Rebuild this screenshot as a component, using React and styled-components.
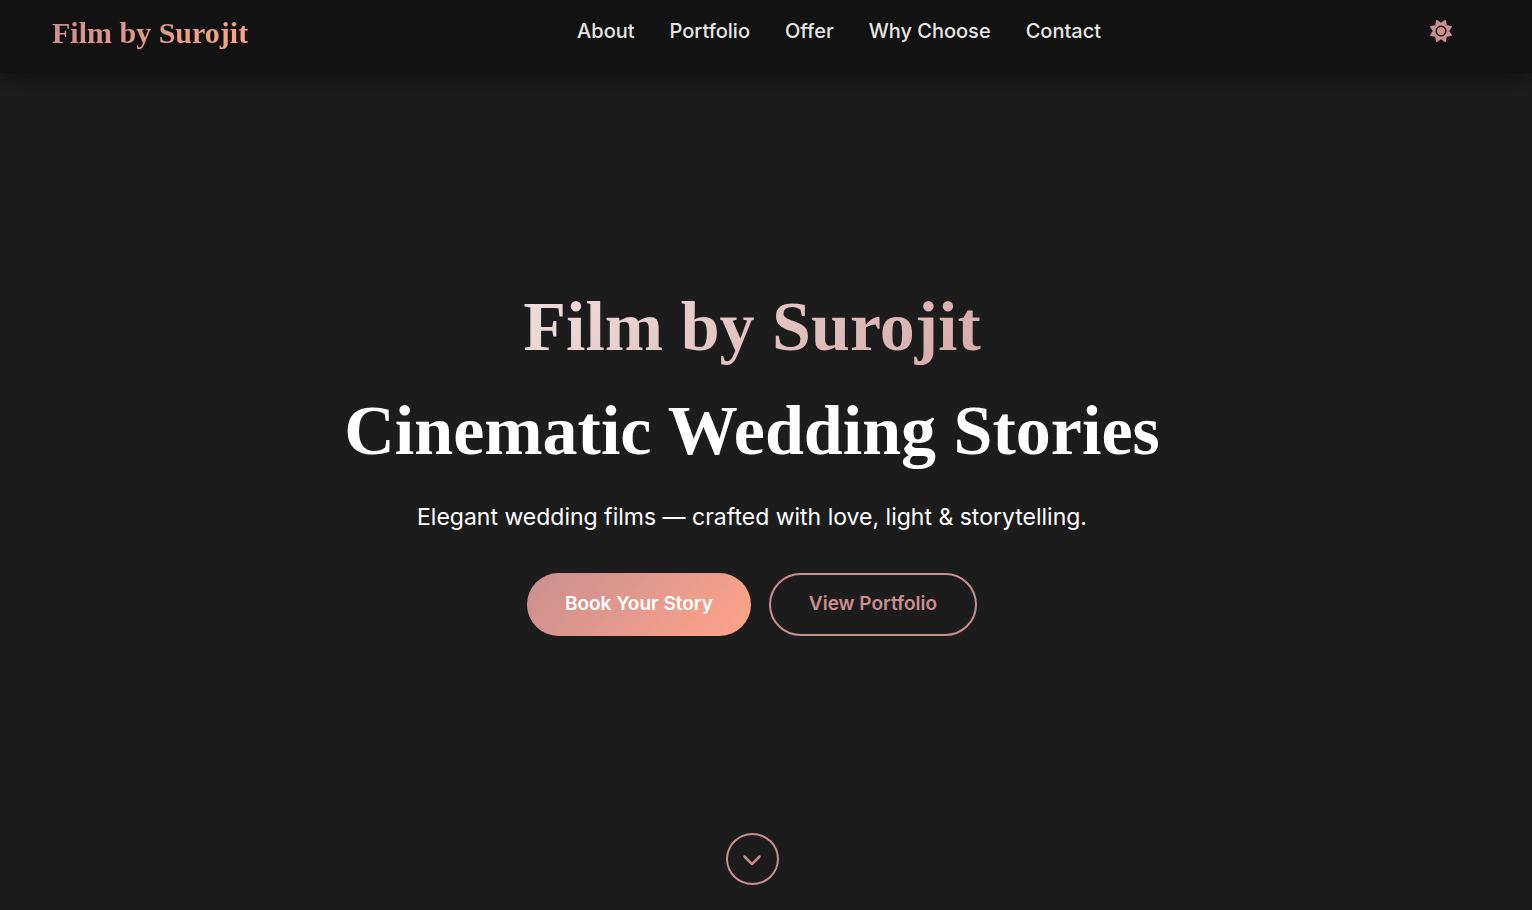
import React from 'react';
import styled, { createGlobalStyle } from 'styled-components';
import { FaSun, FaChevronDown } from 'react-icons/fa6';

const links = [
  { label: 'About', href: '#about' },
  { label: 'Portfolio', href: '#portfolio' },
  { label: 'Offer', href: '#offer' },
  { label: 'Why Choose', href: '#why' },
  { label: 'Contact', href: '#contact' },
];

const App = () => {
  return (
    <Page>
      <GlobalStyle />
      <Header>
        <Logo href='#home'>Film by Surojit</Logo>
        <Nav>
          {links.map((link) => (
            <NavLink
              key={link.href}
              href={link.href}
            >
              {link.label}
            </NavLink>
          ))}
        </Nav>
        <ThemeButton aria-label='Toggle theme'>
          <FaSun />
        </ThemeButton>
      </Header>
      <Hero id='home'>
        <Intro>
          <Title>
            <TitleAccent>Film by Surojit</TitleAccent>
            <TitleLine>Cinematic Wedding Stories</TitleLine>
          </Title>
          <Tagline>
            Elegant wedding films — crafted with love, light &amp; storytelling.
          </Tagline>
          <Actions>
            <Action
              href='#contact'
              $primary
            >
              Book Your Story
            </Action>
            <Action href='#portfolio'>View Portfolio</Action>
          </Actions>
        </Intro>
        <ScrollLink
          href='#about'
          aria-label='Scroll down'
        >
          <FaChevronDown />
        </ScrollLink>
      </Hero>
    </Page>
  );
};

// Styled Components
const GlobalStyle = createGlobalStyle`
  * {
    box-sizing: border-box;
    margin: 0;
    padding: 0;
  }
  body {
    background: #1c1c1c;
    color: white;
    font-family: Inter, 'Liberation Sans', sans-serif;
  }
  a {
    text-decoration: none;
  }
`;

const Page = styled.div`
  display: flex;
  flex-direction: column;
  min-height: 100vh;
`;

const Header = styled.header`
  display: flex;
  align-items: center;
  justify-content: space-between;
  padding: 10px 80px 21px 52px;
  background: #121212;
  box-shadow: 0 6px 24px rgba(0, 0, 0, 0.4);
`;

const Logo = styled.a`
  padding-top: 4px;
  font-family: 'Liberation Serif', serif;
  font-size: 30px;
  font-weight: 700;
  line-height: 38px;
  background: linear-gradient(135deg, #c98f91, #ffa489);
  background-clip: text;
  color: transparent;
`;

const Nav = styled.nav`
  display: flex;
  gap: 35px;
`;

const NavLink = styled.a`
  color: #e6e6e6;
  font-size: 20px;
  font-weight: 500;
  line-height: 28px;
`;

const ThemeButton = styled.button`
  display: flex;
  border: none;
  background: none;
  color: #c98f91;
  font-size: 22px;
  cursor: pointer;
`;

const Hero = styled.section`
  flex: 1;
  display: flex;
  flex-direction: column;
  align-items: center;
  padding: 0 28px 25px 0;
`;

const Intro = styled.div`
  flex: 1;
  display: flex;
  flex-direction: column;
  align-items: center;
  justify-content: center;
  padding-top: 4px;
  text-align: center;
`;

const Title = styled.h1`
  font-family: 'Liberation Serif', serif;
  font-size: 70px;
  font-weight: 700;
  line-height: 104px;
`;

const TitleLine = styled.span`
  display: block;
`;

const TitleAccent = styled.span`
  display: table;
  margin: 0 auto;
  background: linear-gradient(135deg, #f1dfdf, #d6a9a9);
  background-clip: text;
  color: transparent;
`;

const Tagline = styled.p`
  margin: 16px 0 38px;
  font-size: 23px;
  line-height: 36px;
`;

const Actions = styled.div`
  display: flex;
  gap: 18px;
`;

const Action = styled.a`
  padding: ${(props) => (props.$primary ? '17px 38px 19px' : '15px 38px 17px')};
  border: ${(props) => (props.$primary ? 'none' : '2px solid #c98f91')};
  border-radius: 32px;
  background: ${(props) =>
    props.$primary ? 'linear-gradient(135deg, #c98f91, #ffa489)' : 'none'};
  color: ${(props) => (props.$primary ? 'white' : '#c98f91')};
  font-size: 19px;
  font-weight: 600;
  line-height: 27px;
`;

const ScrollLink = styled.a`
  display: flex;
  align-items: center;
  justify-content: center;
  width: 53px;
  height: 52px;
  border: 2px solid #c98f91;
  border-radius: 50%;
  color: #c98f91;
  font-size: 20px;
`;

export default App;
